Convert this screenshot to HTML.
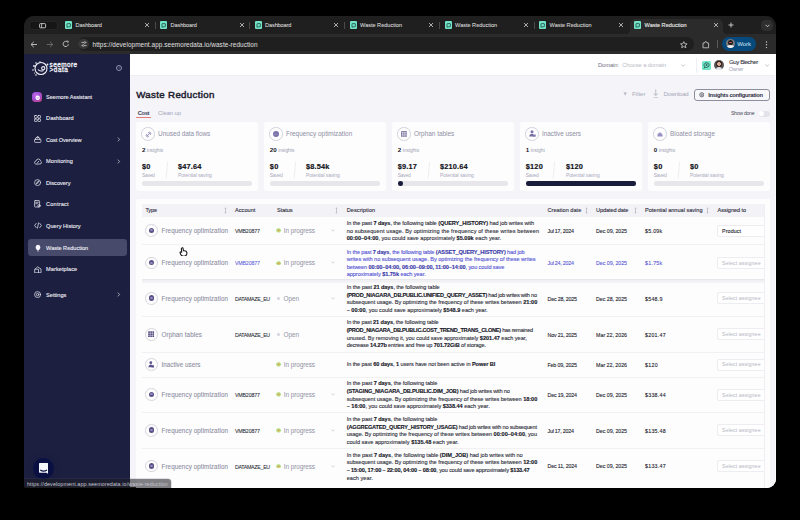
<!DOCTYPE html>
<html><head><meta charset="utf-8"><style>
html,body{margin:0;padding:0;width:800px;height:520px;background:#000;overflow:hidden;}
#win{position:absolute;left:24px;top:16px;width:752px;height:471.5px;border-radius:10px 10px 9px 2px;overflow:hidden;background:#1f1f1f;}
.pg{position:absolute;left:-24px;top:-16px;width:800px;height:520px;}
.pg div{position:absolute;box-sizing:border-box;}
.t{white-space:nowrap;line-height:0;font-family:"Liberation Sans",sans-serif;}
b{font-weight:700;color:var(--b,inherit);}
</style></head><body>
<div id="win">
<div class="pg">
<div style="left:24px;top:16px;width:752px;height:18px;background:#1f1f1f;"></div>
<div style="left:24px;top:34px;width:752px;height:20px;background:#2b2b2b;"></div>
<div style="left:29px;top:21px;width:28.5px;height:8.5px;background:#161616;border-radius:5px;box-shadow:inset 0 0 0 0.6px #333;"></div>
<svg style="position:absolute;left:39px;top:22.5px;" width="8" height="6" viewBox="0 0 8 6"><rect x="0.6" y="0.6" width="6" height="4.2" rx="0.8" fill="none" stroke="#cfcfcf" stroke-width="0.9"/><line x1="2.6" y1="0.6" x2="2.6" y2="4.8" stroke="#cfcfcf" stroke-width="0.8"/></svg>
<div style="left:630px;top:19px;width:93px;height:16px;background:#2b2b2b;border-radius:5px 5px 0 0;"></div>
<div style="left:626px;top:30px;width:4px;height:4px;background:radial-gradient(circle at 0 0,#1f1f1f 4px,#2b2b2b 4.2px);"></div>
<div style="left:723px;top:30px;width:4px;height:4px;background:radial-gradient(circle at 100% 0,#1f1f1f 4px,#2b2b2b 4.2px);"></div>
<div style="left:65px;top:21.2px;width:7.4px;height:7.6px;background:#72e3c6;border-radius:1px;"></div>
<svg style="position:absolute;left:66.2px;top:22.5px;" width="5" height="5" viewBox="0 0 5 5"><path d="M1 4.3 L1 1 Q1 0.6 1.4 0.6 L4 0.6 Q4.4 0.6 4.4 1 L4.4 3.4 Q4.4 3.8 4 3.8 L2 3.8 Z" fill="none" stroke="#1d4d44" stroke-width="0.8"/></svg>
<svg style="position:absolute;left:143.5px;top:22.3px;" width="6" height="6" viewBox="0 0 6 6"><path d="M1 1 L5 5 M5 1 L1 5" stroke="#cfcfcf" stroke-width="0.8"/></svg>
<div style="left:154.8px;top:22px;width:0.7px;height:7px;background:#4a4a4a;"></div>
<div style="left:160px;top:21.2px;width:7.4px;height:7.6px;background:#72e3c6;border-radius:1px;"></div>
<svg style="position:absolute;left:161.2px;top:22.5px;" width="5" height="5" viewBox="0 0 5 5"><path d="M1 4.3 L1 1 Q1 0.6 1.4 0.6 L4 0.6 Q4.4 0.6 4.4 1 L4.4 3.4 Q4.4 3.8 4 3.8 L2 3.8 Z" fill="none" stroke="#1d4d44" stroke-width="0.8"/></svg>
<svg style="position:absolute;left:238.5px;top:22.3px;" width="6" height="6" viewBox="0 0 6 6"><path d="M1 1 L5 5 M5 1 L1 5" stroke="#cfcfcf" stroke-width="0.8"/></svg>
<div style="left:249.3px;top:22px;width:0.7px;height:7px;background:#4a4a4a;"></div>
<div style="left:254.5px;top:21.2px;width:7.4px;height:7.6px;background:#72e3c6;border-radius:1px;"></div>
<svg style="position:absolute;left:255.7px;top:22.5px;" width="5" height="5" viewBox="0 0 5 5"><path d="M1 4.3 L1 1 Q1 0.6 1.4 0.6 L4 0.6 Q4.4 0.6 4.4 1 L4.4 3.4 Q4.4 3.8 4 3.8 L2 3.8 Z" fill="none" stroke="#1d4d44" stroke-width="0.8"/></svg>
<svg style="position:absolute;left:333.0px;top:22.3px;" width="6" height="6" viewBox="0 0 6 6"><path d="M1 1 L5 5 M5 1 L1 5" stroke="#cfcfcf" stroke-width="0.8"/></svg>
<div style="left:344.3px;top:22px;width:0.7px;height:7px;background:#4a4a4a;"></div>
<div style="left:349.5px;top:21.2px;width:7.4px;height:7.6px;background:#72e3c6;border-radius:1px;"></div>
<svg style="position:absolute;left:350.7px;top:22.5px;" width="5" height="5" viewBox="0 0 5 5"><path d="M1 4.3 L1 1 Q1 0.6 1.4 0.6 L4 0.6 Q4.4 0.6 4.4 1 L4.4 3.4 Q4.4 3.8 4 3.8 L2 3.8 Z" fill="none" stroke="#1d4d44" stroke-width="0.8"/></svg>
<svg style="position:absolute;left:428.0px;top:22.3px;" width="6" height="6" viewBox="0 0 6 6"><path d="M1 1 L5 5 M5 1 L1 5" stroke="#cfcfcf" stroke-width="0.8"/></svg>
<div style="left:439.3px;top:22px;width:0.7px;height:7px;background:#4a4a4a;"></div>
<div style="left:444.5px;top:21.2px;width:7.4px;height:7.6px;background:#72e3c6;border-radius:1px;"></div>
<svg style="position:absolute;left:445.7px;top:22.5px;" width="5" height="5" viewBox="0 0 5 5"><path d="M1 4.3 L1 1 Q1 0.6 1.4 0.6 L4 0.6 Q4.4 0.6 4.4 1 L4.4 3.4 Q4.4 3.8 4 3.8 L2 3.8 Z" fill="none" stroke="#1d4d44" stroke-width="0.8"/></svg>
<svg style="position:absolute;left:523.0px;top:22.3px;" width="6" height="6" viewBox="0 0 6 6"><path d="M1 1 L5 5 M5 1 L1 5" stroke="#cfcfcf" stroke-width="0.8"/></svg>
<div style="left:533.8px;top:22px;width:0.7px;height:7px;background:#4a4a4a;"></div>
<div style="left:539px;top:21.2px;width:7.4px;height:7.6px;background:#72e3c6;border-radius:1px;"></div>
<svg style="position:absolute;left:540.2px;top:22.5px;" width="5" height="5" viewBox="0 0 5 5"><path d="M1 4.3 L1 1 Q1 0.6 1.4 0.6 L4 0.6 Q4.4 0.6 4.4 1 L4.4 3.4 Q4.4 3.8 4 3.8 L2 3.8 Z" fill="none" stroke="#1d4d44" stroke-width="0.8"/></svg>
<svg style="position:absolute;left:617.5px;top:22.3px;" width="6" height="6" viewBox="0 0 6 6"><path d="M1 1 L5 5 M5 1 L1 5" stroke="#cfcfcf" stroke-width="0.8"/></svg>
<div style="left:634px;top:21.2px;width:7.4px;height:7.6px;background:#72e3c6;border-radius:1px;"></div>
<svg style="position:absolute;left:635.2px;top:22.5px;" width="5" height="5" viewBox="0 0 5 5"><path d="M1 4.3 L1 1 Q1 0.6 1.4 0.6 L4 0.6 Q4.4 0.6 4.4 1 L4.4 3.4 Q4.4 3.8 4 3.8 L2 3.8 Z" fill="none" stroke="#1d4d44" stroke-width="0.8"/></svg>
<svg style="position:absolute;left:712.5px;top:22.3px;" width="6" height="6" viewBox="0 0 6 6"><path d="M1 1 L5 5 M5 1 L1 5" stroke="#cfcfcf" stroke-width="0.8"/></svg>
<svg style="position:absolute;left:728px;top:22px;" width="6" height="6" viewBox="0 0 6 6"><path d="M3 0.5 V5.5 M0.5 3 H5.5" stroke="#d0d0d0" stroke-width="0.9"/></svg>
<div style="left:760.8px;top:19.6px;width:12.1px;height:11.6px;background:#2f2f2f;border-radius:4.5px;"></div>
<svg style="position:absolute;left:764.5px;top:23.5px;" width="5" height="4" viewBox="0 0 5 4"><path d="M0.6 0.8 L2.5 2.8 L4.4 0.8" fill="none" stroke="#d0d0d0" stroke-width="0.9"/></svg>
<svg style="position:absolute;left:30px;top:40.5px;" width="8" height="7" viewBox="0 0 8 7"><path d="M7 3.5 H1.2 M3.8 0.8 L1 3.5 L3.8 6.2" fill="none" stroke="#c8c8c8" stroke-width="0.9"/></svg>
<svg style="position:absolute;left:45.5px;top:40.5px;" width="8" height="7" viewBox="0 0 8 7"><path d="M0.8 3.5 H6.6 M4 0.8 L6.8 3.5 L4 6.2" fill="none" stroke="#6e6e6e" stroke-width="0.9"/></svg>
<svg style="position:absolute;left:61.5px;top:40.2px;" width="8" height="8" viewBox="0 0 8 8"><path d="M6.3 4.2 A2.6 2.6 0 1 1 5.4 2" fill="none" stroke="#c8c8c8" stroke-width="0.9"/><path d="M4.6 0.8 L6.3 1.2 L5.9 2.9" fill="none" stroke="#c8c8c8" stroke-width="0.8"/></svg>
<div style="left:77.5px;top:37px;width:616.5px;height:14px;background:#1f1f1f;border-radius:7px;"></div>
<div style="left:78.3px;top:38.6px;width:10.8px;height:10.8px;background:#383838;border-radius:50%;"></div>
<svg style="position:absolute;left:80.8px;top:41px;" width="6" height="6" viewBox="0 0 6 6"><path d="M0.5 1.5 H5.5 M0.5 4.5 H5.5" stroke="#d8d8d8" stroke-width="0.7"/><circle cx="3.7" cy="1.5" r="0.9" fill="#383838" stroke="#d8d8d8" stroke-width="0.6"/><circle cx="2.2" cy="4.5" r="0.9" fill="#383838" stroke="#d8d8d8" stroke-width="0.6"/></svg>
<svg style="position:absolute;left:680px;top:40.5px;" width="8" height="8" viewBox="0 0 8 8"><path d="M3.8 0.6 L4.8 2.7 L7.1 2.9 L5.3 4.4 L5.9 6.7 L3.8 5.5 L1.7 6.7 L2.3 4.4 L0.5 2.9 L2.8 2.7 Z" fill="none" stroke="#d0d0d0" stroke-width="0.8" stroke-linejoin="round"/></svg>
<svg style="position:absolute;left:702px;top:40.5px;" width="8" height="8" viewBox="0 0 8 8"><path d="M1 2 H2.6 Q2.6 0.6 3.8 0.6 Q5 0.6 5 2 H6.6 V6.8 H1 Z" fill="none" stroke="#d0d0d0" stroke-width="0.8" stroke-linejoin="round"/></svg>
<div style="left:717px;top:40px;width:0.7px;height:8px;background:#5a5a5a;"></div>
<div style="left:722px;top:36.8px;width:34.3px;height:14.2px;background:#064a7d;border-radius:7.1px;"></div>
<div style="left:725.9px;top:39.3px;width:9px;height:9px;border-radius:50%;overflow:hidden;background:#7a7a7a;"><div style="left:2.2px;top:1px;width:4.6px;height:5px;border-radius:50% 50% 45% 45%;background:#1e1e1e;"></div><div style="left:3.2px;top:2.4px;width:2.6px;height:1.6px;border-radius:50%;background:#d25a5a;"></div><div style="left:0.8px;top:6.2px;width:7.4px;height:4px;border-radius:50% 50% 0 0;background:#f0f0f0;"></div></div>
<svg style="position:absolute;left:764.5px;top:40.5px;" width="3" height="8" viewBox="0 0 3 8"><circle cx="1.5" cy="1" r="0.7" fill="#cfcfcf"/><circle cx="1.5" cy="3.8" r="0.7" fill="#cfcfcf"/><circle cx="1.5" cy="6.6" r="0.7" fill="#cfcfcf"/></svg>
<div style="left:24px;top:54px;width:106px;height:433px;background:#1c1f40;"></div>
<div style="left:130px;top:54px;width:646px;height:433px;background:#f5f4f9;"></div>
<div style="left:130px;top:54px;width:646px;height:22px;background:#ffffff;border-bottom:0.5px solid #ededf3;"></div>
<svg style="position:absolute;left:681.3px;top:63.8px;" width="4.5" height="3" viewBox="0 0 4.5 3"><path d="M0.5 0.5 L2.25 2.3 L4 0.5" fill="none" stroke="#9a9bab" stroke-width="0.6"/></svg>
<div style="left:696px;top:58px;width:0.6px;height:14.5px;background:#f1f1f5;"></div>
<div style="left:701.6px;top:60.9px;width:9.6px;height:9.3px;background:#6fe6c8;border-radius:1.5px;"></div>
<svg style="position:absolute;left:702.8px;top:62px;" width="7.2" height="7.2" viewBox="0 0 7.2 7.2"><path d="M1.2 6.2 L1.8 4.6 Q0.9 3.7 1.1 2.6 Q1.5 0.9 3.6 0.8 Q5.9 0.9 6.2 3 Q6.2 5.2 3.6 5.4 Q2.7 5.4 2.2 5.2 Z" fill="none" stroke="#234a4a" stroke-width="0.8"/><circle cx="3.6" cy="3.1" r="1" fill="#2d6a5a"/></svg>
<div style="left:713.8px;top:60.1px;width:10.2px;height:10.2px;border-radius:50%;background:radial-gradient(circle at 50% 40%,#d9a894 0 1.6px,#3a2a28 1.8px 3px,#555 3.2px 100%);"></div>
<div style="left:715.5px;top:66.8px;width:6.8px;height:3.4px;border-radius:3.4px 3.4px 0 0;background:#e6e6ea;"></div>
<svg style="position:absolute;left:765px;top:63.6px;" width="4.5" height="3" viewBox="0 0 4.5 3"><path d="M0.5 0.5 L2.25 2.3 L4 0.5" fill="none" stroke="#9a9bab" stroke-width="0.6"/></svg>
<div style="left:136px;top:117.2px;width:15px;height:1.3px;background:#e27a7a;border-radius:1px;"></div>
<svg style="position:absolute;left:622.6px;top:92.3px;" width="4.4" height="4" viewBox="0 0 4.4 4"><path d="M0.3 0.4 H4.1 L2.7 2.2 V3.6 L1.7 3.1 V2.2 Z" fill="#b3b4c2"/></svg>
<svg style="position:absolute;left:653px;top:88.8px;" width="5.5" height="9.6" viewBox="0 0 5.5 9.6"><path d="M2.75 0.4 V6.4 M0.7 4.4 L2.75 6.5 L4.8 4.4 M0.4 8.9 H5.1" fill="none" stroke="#a6a7b6" stroke-width="0.75"/></svg>
<div style="left:694.4px;top:88.6px;width:75.6px;height:12.6px;border:0.7px solid #8c8d9e;border-radius:3px;background:#f8f8fb;"></div>
<svg style="position:absolute;left:698.8px;top:92px;" width="5.6" height="5.6" viewBox="0 0 5.6 5.6"><circle cx="2.8" cy="2.8" r="2.1" fill="none" stroke="#3a3b4c" stroke-width="0.7"/><circle cx="2.8" cy="2.8" r="0.8" fill="none" stroke="#3a3b4c" stroke-width="0.6"/></svg>
<div style="left:758.7px;top:110.6px;width:11px;height:6px;background:#e3e3ea;border-radius:3px;"></div>
<div style="left:759.4px;top:111.3px;width:4.6px;height:4.6px;border-radius:50%;background:#fff;"></div>
<div style="left:136.1px;top:121.9px;width:122px;height:68.7px;background:#fdfdfe;border-radius:3px;"></div>
<div style="left:141.30px;top:127.4px;width:13.4px;height:13.4px;border:0.7px solid #d3d3dc;border-radius:50%;"></div>
<svg style="position:absolute;left:164.6px;top:160.5px;" width="4" height="18" viewBox="0 0 4 18"><path d="M2.6 0.5 L1.2 17.5" stroke="#e4e4eb" stroke-width="0.6"/></svg>
<div style="left:141.9px;top:181.3px;width:110.6px;height:4.4px;background:#e6e6eb;border-radius:2.2px;"></div>
<div style="left:264.0px;top:121.9px;width:122px;height:68.7px;background:#fdfdfe;border-radius:3px;"></div>
<div style="left:269.20px;top:127.4px;width:13.4px;height:13.4px;border:0.7px solid #d3d3dc;border-radius:50%;"></div>
<svg style="position:absolute;left:292.5px;top:160.5px;" width="4" height="18" viewBox="0 0 4 18"><path d="M2.6 0.5 L1.2 17.5" stroke="#e4e4eb" stroke-width="0.6"/></svg>
<div style="left:269.8px;top:181.3px;width:110.6px;height:4.4px;background:#e6e6eb;border-radius:2.2px;"></div>
<div style="left:392.0px;top:121.9px;width:122px;height:68.7px;background:#fdfdfe;border-radius:3px;"></div>
<div style="left:397.20px;top:127.4px;width:13.4px;height:13.4px;border:0.7px solid #d3d3dc;border-radius:50%;"></div>
<svg style="position:absolute;left:426.571673125px;top:160.5px;" width="4" height="18" viewBox="0 0 4 18"><path d="M2.6 0.5 L1.2 17.5" stroke="#e4e4eb" stroke-width="0.6"/></svg>
<div style="left:397.8px;top:181.3px;width:110.6px;height:4.4px;background:#e6e6eb;border-radius:2.2px;"></div>
<div style="left:397.8px;top:181.3px;width:5px;height:4.4px;background:#1b1d3d;border-radius:2.2px;"></div>
<div style="left:520.0px;top:121.9px;width:122px;height:68.7px;background:#fdfdfe;border-radius:3px;"></div>
<div style="left:525.20px;top:127.4px;width:13.4px;height:13.4px;border:0.7px solid #d3d3dc;border-radius:50%;"></div>
<svg style="position:absolute;left:552.45418625px;top:160.5px;" width="4" height="18" viewBox="0 0 4 18"><path d="M2.6 0.5 L1.2 17.5" stroke="#e4e4eb" stroke-width="0.6"/></svg>
<div style="left:525.8px;top:181.3px;width:110.6px;height:4.4px;background:#e6e6eb;border-radius:2.2px;"></div>
<div style="left:525.8px;top:181.3px;width:110.6px;height:4.4px;background:#1b1d3d;border-radius:2.2px;"></div>
<div style="left:648.0px;top:121.9px;width:122px;height:68.7px;background:#fdfdfe;border-radius:3px;"></div>
<div style="left:653.20px;top:127.4px;width:13.4px;height:13.4px;border:0.7px solid #d3d3dc;border-radius:50%;"></div>
<svg style="position:absolute;left:676.5px;top:160.5px;" width="4" height="18" viewBox="0 0 4 18"><path d="M2.6 0.5 L1.2 17.5" stroke="#e4e4eb" stroke-width="0.6"/></svg>
<div style="left:653.8px;top:181.3px;width:110.6px;height:4.4px;background:#e6e6eb;border-radius:2.2px;"></div>
<div style="left:136px;top:199px;width:634px;height:300px;background:#fdfdfe;border-radius:3px;"></div>
<div style="left:142px;top:204px;width:621.5px;height:12.6px;background:#f3f2f7;"></div>
<svg style="position:absolute;left:223.5px;top:206.8px;" width="3" height="7" viewBox="0 0 3 7"><path d="M1.5 0.4 L0.5 1.6 H2.5 Z M1.5 6.6 L0.5 5.4 H2.5 Z" fill="#9c9cab"/><path d="M1.5 1.5 V5.5" stroke="#9c9cab" stroke-width="0.5"/></svg>
<svg style="position:absolute;left:334.5px;top:206.8px;" width="3" height="7" viewBox="0 0 3 7"><path d="M1.5 0.4 L0.5 1.6 H2.5 Z M1.5 6.6 L0.5 5.4 H2.5 Z" fill="#9c9cab"/><path d="M1.5 1.5 V5.5" stroke="#9c9cab" stroke-width="0.5"/></svg>
<svg style="position:absolute;left:584.5px;top:206.8px;" width="3" height="7" viewBox="0 0 3 7"><path d="M1.5 0.4 L0.5 1.6 H2.5 Z M1.5 6.6 L0.5 5.4 H2.5 Z" fill="#9c9cab"/><path d="M1.5 1.5 V5.5" stroke="#9c9cab" stroke-width="0.5"/></svg>
<svg style="position:absolute;left:633.5px;top:206.8px;" width="3" height="7" viewBox="0 0 3 7"><path d="M1.5 0.4 L0.5 1.6 H2.5 Z M1.5 6.6 L0.5 5.4 H2.5 Z" fill="#9c9cab"/><path d="M1.5 1.5 V5.5" stroke="#9c9cab" stroke-width="0.5"/></svg>
<svg style="position:absolute;left:705.8px;top:206.8px;" width="3" height="7" viewBox="0 0 3 7"><path d="M1.5 0.4 L0.5 1.6 H2.5 Z M1.5 6.6 L0.5 5.4 H2.5 Z" fill="#9c9cab"/><path d="M1.5 1.5 V5.5" stroke="#9c9cab" stroke-width="0.5"/></svg>
<div style="left:142px;top:244.10px;width:621.5px;height:0;border-top:0.7px solid #f1f1f4;"></div>
<div style="left:145.00px;top:224.45px;width:12.6px;height:12.6px;border:0.7px solid #d6d6de;border-radius:50%;"></div>
<div style="left:148.60px;top:227.65px;width:5.6px;height:5.6px;border-radius:50%;background:#5a5088;"></div>
<svg style="position:absolute;left:149.9px;top:229.45px;" width="3" height="2" viewBox="0 0 3 2"><rect x="0.3" y="0.2" width="2.4" height="1.6" rx="0.4" fill="#c9c3e8" opacity="0.7"/></svg>
<svg style="position:absolute;left:275.9px;top:228.45px;" width="5.2" height="4.6" viewBox="0 0 5.2 4.6"><path d="M1.6 0.4 H3.6 V1.4 H4.9 V3.2 H3.6 V4.3 H1.6 V3.2 H0.3 V1.4 H1.6 Z" fill="#a6dd72" stroke="#a6dd72" stroke-width="0.3" stroke-linejoin="round"/><path d="M3.6 0.5 L1.0 2.6 H2.5 L1.6 4.2 L4.3 2.0 H2.8 Z" fill="#f0a04e"/></svg>
<svg style="position:absolute;left:330.8px;top:229.25px;" width="4" height="3" viewBox="0 0 4 3"><path d="M0.4 0.5 L2 2.2 L3.6 0.5" fill="none" stroke="#b0b1be" stroke-width="0.55"/></svg>
<div style="left:717px;top:224.75px;width:50px;height:12px;border:0.6px solid #ececf1;border-radius:2px;background:#fff;"></div>
<div style="left:142px;top:279.3px;width:621.5px;height:4.5px;background:linear-gradient(#e4e4ea,rgba(240,240,245,0));"></div>
<div style="left:142px;top:279.50px;width:621.5px;height:0;border-top:0.7px solid #f1f1f4;"></div>
<div style="left:145.00px;top:256.50px;width:12.6px;height:12.6px;border:0.7px solid #d6d6de;border-radius:50%;"></div>
<div style="left:148.60px;top:259.70px;width:5.6px;height:5.6px;border-radius:50%;background:#5a5088;"></div>
<svg style="position:absolute;left:149.9px;top:261.5px;" width="3" height="2" viewBox="0 0 3 2"><rect x="0.3" y="0.2" width="2.4" height="1.6" rx="0.4" fill="#c9c3e8" opacity="0.7"/></svg>
<svg style="position:absolute;left:275.9px;top:260.5px;" width="5.2" height="4.6" viewBox="0 0 5.2 4.6"><path d="M1.6 0.4 H3.6 V1.4 H4.9 V3.2 H3.6 V4.3 H1.6 V3.2 H0.3 V1.4 H1.6 Z" fill="#a6dd72" stroke="#a6dd72" stroke-width="0.3" stroke-linejoin="round"/><path d="M3.6 0.5 L1.0 2.6 H2.5 L1.6 4.2 L4.3 2.0 H2.8 Z" fill="#f0a04e"/></svg>
<svg style="position:absolute;left:330.8px;top:261.3px;" width="4" height="3" viewBox="0 0 4 3"><path d="M0.4 0.5 L2 2.2 L3.6 0.5" fill="none" stroke="#b0b1be" stroke-width="0.55"/></svg>
<div style="left:717px;top:256.80px;width:50px;height:12px;border:0.6px solid #ececf1;border-radius:2px;background:#fff;"></div>
<div style="left:142px;top:315.50px;width:621.5px;height:0;border-top:0.7px solid #f1f1f4;"></div>
<div style="left:145.00px;top:292.00px;width:12.6px;height:12.6px;border:0.7px solid #d6d6de;border-radius:50%;"></div>
<div style="left:148.60px;top:295.20px;width:5.6px;height:5.6px;border-radius:50%;background:#5a5088;"></div>
<svg style="position:absolute;left:149.9px;top:297.0px;" width="3" height="2" viewBox="0 0 3 2"><rect x="0.3" y="0.2" width="2.4" height="1.6" rx="0.4" fill="#c9c3e8" opacity="0.7"/></svg>
<div style="left:277.3px;top:297.00px;width:2.6px;height:2.6px;border-radius:50%;background:#d8d8e0;"></div>
<svg style="position:absolute;left:330.8px;top:296.8px;" width="4" height="3" viewBox="0 0 4 3"><path d="M0.4 0.5 L2 2.2 L3.6 0.5" fill="none" stroke="#b0b1be" stroke-width="0.55"/></svg>
<div style="left:717px;top:292.30px;width:50px;height:12px;border:0.6px solid #ececf1;border-radius:2px;background:#fff;"></div>
<div style="left:142px;top:351.90px;width:621.5px;height:0;border-top:0.7px solid #f1f1f4;"></div>
<div style="left:145.00px;top:328.10px;width:12.6px;height:12.6px;border:0.7px solid #d6d6de;border-radius:50%;"></div>
<svg style="position:absolute;left:148.20000000000002px;top:330.9px;" width="6.4" height="6.4" viewBox="0 0 6.4 6.4"><g fill="#5a5388"><rect x="0.15" y="0.15" width="1.75" height="1.75" rx="0.35"/><rect x="0.15" y="2.25" width="1.75" height="1.75" rx="0.35"/><rect x="0.15" y="4.35" width="1.75" height="1.75" rx="0.35"/><rect x="2.25" y="0.15" width="1.75" height="1.75" rx="0.35"/><rect x="2.25" y="2.25" width="1.75" height="1.75" rx="0.35"/><rect x="2.25" y="4.35" width="1.75" height="1.75" rx="0.35"/><rect x="4.35" y="0.15" width="1.75" height="1.75" rx="0.35"/><rect x="4.35" y="2.25" width="1.75" height="1.75" rx="0.35"/><rect x="4.35" y="4.35" width="1.75" height="1.75" rx="0.35"/></g></svg>
<div style="left:277.3px;top:333.10px;width:2.6px;height:2.6px;border-radius:50%;background:#d8d8e0;"></div>
<div style="left:717px;top:328.40px;width:50px;height:12px;border:0.6px solid #ececf1;border-radius:2px;background:#fff;"></div>
<div style="left:142px;top:376.60px;width:621.5px;height:0;border-top:0.7px solid #f1f1f4;"></div>
<div style="left:145.00px;top:358.20px;width:12.6px;height:12.6px;border:0.7px solid #d6d6de;border-radius:50%;"></div>
<svg style="position:absolute;left:148.10000000000002px;top:361.1px;" width="6.4" height="6.8" viewBox="0 0 6.4 6.8"><circle cx="2.8" cy="1.7" r="1.4" fill="#5d538d"/><path d="M0.3 6.2 Q0.6 3.6 2.8 3.6 Q4 3.6 4.5 4.3 L4.5 6.2 Z" fill="#5d538d"/><rect x="3.6" y="4.3" width="2.6" height="2.2" rx="0.5" fill="#5d538d"/></svg>
<svg style="position:absolute;left:275.9px;top:362.2px;" width="5.2" height="4.6" viewBox="0 0 5.2 4.6"><path d="M1.6 0.4 H3.6 V1.4 H4.9 V3.2 H3.6 V4.3 H1.6 V3.2 H0.3 V1.4 H1.6 Z" fill="#a6dd72" stroke="#a6dd72" stroke-width="0.3" stroke-linejoin="round"/><path d="M3.6 0.5 L1.0 2.6 H2.5 L1.6 4.2 L4.3 2.0 H2.8 Z" fill="#f0a04e"/></svg>
<div style="left:717px;top:358.50px;width:50px;height:12px;border:0.6px solid #ececf1;border-radius:2px;background:#fff;"></div>
<div style="left:142px;top:412.10px;width:621.5px;height:0;border-top:0.7px solid #f1f1f4;"></div>
<div style="left:145.00px;top:388.40px;width:12.6px;height:12.6px;border:0.7px solid #d6d6de;border-radius:50%;"></div>
<div style="left:148.60px;top:391.60px;width:5.6px;height:5.6px;border-radius:50%;background:#5a5088;"></div>
<svg style="position:absolute;left:149.9px;top:393.4px;" width="3" height="2" viewBox="0 0 3 2"><rect x="0.3" y="0.2" width="2.4" height="1.6" rx="0.4" fill="#c9c3e8" opacity="0.7"/></svg>
<svg style="position:absolute;left:275.9px;top:392.4px;" width="5.2" height="4.6" viewBox="0 0 5.2 4.6"><path d="M1.6 0.4 H3.6 V1.4 H4.9 V3.2 H3.6 V4.3 H1.6 V3.2 H0.3 V1.4 H1.6 Z" fill="#a6dd72" stroke="#a6dd72" stroke-width="0.3" stroke-linejoin="round"/><path d="M3.6 0.5 L1.0 2.6 H2.5 L1.6 4.2 L4.3 2.0 H2.8 Z" fill="#f0a04e"/></svg>
<svg style="position:absolute;left:330.8px;top:393.2px;" width="4" height="3" viewBox="0 0 4 3"><path d="M0.4 0.5 L2 2.2 L3.6 0.5" fill="none" stroke="#b0b1be" stroke-width="0.55"/></svg>
<div style="left:717px;top:388.70px;width:50px;height:12px;border:0.6px solid #ececf1;border-radius:2px;background:#fff;"></div>
<div style="left:142px;top:447.70px;width:621.5px;height:0;border-top:0.7px solid #f1f1f4;"></div>
<div style="left:145.00px;top:424.10px;width:12.6px;height:12.6px;border:0.7px solid #d6d6de;border-radius:50%;"></div>
<div style="left:148.60px;top:427.30px;width:5.6px;height:5.6px;border-radius:50%;background:#5a5088;"></div>
<svg style="position:absolute;left:149.9px;top:429.09999999999997px;" width="3" height="2" viewBox="0 0 3 2"><rect x="0.3" y="0.2" width="2.4" height="1.6" rx="0.4" fill="#c9c3e8" opacity="0.7"/></svg>
<svg style="position:absolute;left:275.9px;top:428.09999999999997px;" width="5.2" height="4.6" viewBox="0 0 5.2 4.6"><path d="M1.6 0.4 H3.6 V1.4 H4.9 V3.2 H3.6 V4.3 H1.6 V3.2 H0.3 V1.4 H1.6 Z" fill="#a6dd72" stroke="#a6dd72" stroke-width="0.3" stroke-linejoin="round"/><path d="M3.6 0.5 L1.0 2.6 H2.5 L1.6 4.2 L4.3 2.0 H2.8 Z" fill="#f0a04e"/></svg>
<svg style="position:absolute;left:330.8px;top:428.9px;" width="4" height="3" viewBox="0 0 4 3"><path d="M0.4 0.5 L2 2.2 L3.6 0.5" fill="none" stroke="#b0b1be" stroke-width="0.55"/></svg>
<div style="left:717px;top:424.40px;width:50px;height:12px;border:0.6px solid #ececf1;border-radius:2px;background:#fff;"></div>
<div style="left:145.00px;top:459.80px;width:12.6px;height:12.6px;border:0.7px solid #d6d6de;border-radius:50%;"></div>
<div style="left:148.60px;top:463.00px;width:5.6px;height:5.6px;border-radius:50%;background:#5a5088;"></div>
<svg style="position:absolute;left:149.9px;top:464.8px;" width="3" height="2" viewBox="0 0 3 2"><rect x="0.3" y="0.2" width="2.4" height="1.6" rx="0.4" fill="#c9c3e8" opacity="0.7"/></svg>
<svg style="position:absolute;left:275.9px;top:463.8px;" width="5.2" height="4.6" viewBox="0 0 5.2 4.6"><path d="M1.6 0.4 H3.6 V1.4 H4.9 V3.2 H3.6 V4.3 H1.6 V3.2 H0.3 V1.4 H1.6 Z" fill="#a6dd72" stroke="#a6dd72" stroke-width="0.3" stroke-linejoin="round"/><path d="M3.6 0.5 L1.0 2.6 H2.5 L1.6 4.2 L4.3 2.0 H2.8 Z" fill="#f0a04e"/></svg>
<svg style="position:absolute;left:330.8px;top:464.6px;" width="4" height="3" viewBox="0 0 4 3"><path d="M0.4 0.5 L2 2.2 L3.6 0.5" fill="none" stroke="#b0b1be" stroke-width="0.55"/></svg>
<div style="left:717px;top:460.10px;width:50px;height:12px;border:0.6px solid #ececf1;border-radius:2px;background:#fff;"></div>
<div style="left:763.5px;top:199px;width:6.5px;height:300px;background:#fdfdfe;"></div>
<div style="left:763.5px;top:204px;width:0.6px;height:300px;background:#efeff4;"></div>
<div style="left:770px;top:76px;width:5px;height:433px;background:#f5f4f9;"></div>
<div style="left:775px;top:54px;width:1px;height:434px;background:#fbfbfd;"></div>
<svg style="position:absolute;left:31px;top:59.5px;" width="19" height="17" viewBox="0 0 19 17"><g fill="none" stroke="#f2f2f7" stroke-width="1.1"><circle cx="10" cy="8.5" r="6"/><path d="M7 9.5 Q9 12 12.5 10.5"/><circle cx="12.2" cy="8.2" r="1.6"/></g><g fill="#f2f2f7"><circle cx="3" cy="6" r="0.9"/><circle cx="2" cy="10" r="0.8"/><circle cx="5" cy="3" r="0.8"/><circle cx="16.5" cy="4.5" r="0.9"/><circle cx="5" cy="15" r="0.8"/><circle cx="3.5" cy="13" r="0.6"/><circle cx="9" cy="2" r="0.7"/></g></svg>
<div style="left:116.2px;top:65px;width:6px;height:6px;border:0.7px solid #8f91ad;border-radius:50%;"></div>
<svg style="position:absolute;left:117.6px;top:66.4px;" width="3.2" height="3.2" viewBox="0 0 3.2 3.2"><path d="M2 0.4 L0.8 1.6 L2 2.8" fill="none" stroke="#8f91ad" stroke-width="0.6"/></svg>
<div style="left:32.4px;top:92.4px;width:10px;height:9.6px;border-radius:3.5px;background:radial-gradient(circle at 40% 35%,#c46be8 0,#9b4fd6 45%,#d9406c 100%);"></div>
<svg style="position:absolute;left:34.7px;top:94.5px;" width="5.4" height="5.4" viewBox="0 0 5.4 5.4"><circle cx="2.7" cy="2.7" r="2.2" fill="#fff"/><path d="M1.8 2.3 L2.7 3.4 L3.6 2.3" fill="none" stroke="#b44fd0" stroke-width="0.6"/></svg>
<div style="left:28px;top:239px;width:99px;height:17.2px;background:#474a6b;border-radius:3px;"></div>
<svg style="position:absolute;left:34px;top:114.5px;" width="7" height="7" viewBox="0 0 7 7"><g fill="none" stroke="#e3e3ec" stroke-width="0.75" stroke-linejoin="round" stroke-linecap="round"><rect x="0.5" y="0.5" width="2.6" height="2.6" rx="0.6"/><rect x="3.9" y="0.5" width="2.6" height="2.6" rx="0.6"/><rect x="0.5" y="3.9" width="2.6" height="2.6" rx="0.6"/><rect x="3.9" y="3.9" width="2.6" height="2.6" rx="0.6"/></g></svg>
<svg style="position:absolute;left:34px;top:136px;" width="7.5" height="7" viewBox="0 0 7.5 7"><g fill="none" stroke="#e3e3ec" stroke-width="0.75" stroke-linejoin="round" stroke-linecap="round"><rect x="0.6" y="3.4" width="6.3" height="3" rx="0.6"/><path d="M1.6 3.4 V2 Q3.7 0.3 5.8 2 V3.4"/><circle cx="3.7" cy="1.3" r="0.8"/></g></svg>
<svg style="position:absolute;left:33.8px;top:157.6px;" width="8" height="7" viewBox="0 0 8 7"><g fill="none" stroke="#e3e3ec" stroke-width="0.75" stroke-linejoin="round" stroke-linecap="round"><path d="M1.4 6 Q0.3 5.6 0.6 4.2 Q0.9 3 2 3 Q2.5 0.8 4.5 1 Q6.4 1.3 6.6 3.2 Q7.6 3.6 7.4 5 Q7.2 6 6.3 6 Z"/><path d="M3.2 5.2 L4.6 3.4"/></g></svg>
<svg style="position:absolute;left:34px;top:179.3px;" width="7.2" height="7.2" viewBox="0 0 7.2 7.2"><g fill="none" stroke="#e3e3ec" stroke-width="0.75" stroke-linejoin="round" stroke-linecap="round"><circle cx="3.6" cy="3.6" r="3"/><path d="M4.8 2.2 L3.9 4 L2.4 5 L3.2 3.2 Z"/></g></svg>
<svg style="position:absolute;left:34.2px;top:200.2px;" width="7" height="8" viewBox="0 0 7 8"><g fill="none" stroke="#e3e3ec" stroke-width="0.75" stroke-linejoin="round" stroke-linecap="round"><rect x="0.6" y="0.6" width="5" height="6.4" rx="0.6"/><path d="M1.8 2.3 H4.4 M1.8 3.7 H3.4"/><circle cx="5" cy="5.8" r="1.2"/></g></svg>
<svg style="position:absolute;left:33.5px;top:222.3px;" width="8" height="7" viewBox="0 0 8 7"><g fill="none" stroke="#e3e3ec" stroke-width="0.75" stroke-linejoin="round" stroke-linecap="round"><path d="M2.2 1.4 L0.6 3.5 L2.2 5.6 M5.8 1.4 L7.4 3.5 L5.8 5.6 M4.6 0.8 L3.4 6.2"/></g></svg>
<svg style="position:absolute;left:34.5px;top:243.5px;" width="6" height="8" viewBox="0 0 6 8"><path d="M3 0.8 Q5.4 0.8 5.4 3.3 Q5.4 4.5 4.3 5.4 V6 H1.7 V5.4 Q0.6 4.5 0.6 3.3 Q0.6 0.8 3 0.8 Z" fill="#f5f5fa"/><path d="M2 6.9 H4" stroke="#f5f5fa" stroke-width="0.7"/></svg>
<svg style="position:absolute;left:33.8px;top:265.5px;" width="8" height="7.5" viewBox="0 0 8 7.5"><g fill="none" stroke="#e3e3ec" stroke-width="0.75" stroke-linejoin="round" stroke-linecap="round"><path d="M1 3.2 L3.6 0.8 L7 3 V6.8 H1 Z"/><path d="M1 3.2 H4.5 V6.8"/></g></svg>
<svg style="position:absolute;left:34px;top:291.2px;" width="7.2" height="7.2" viewBox="0 0 7.2 7.2"><g fill="none" stroke="#e3e3ec" stroke-width="0.75" stroke-linejoin="round" stroke-linecap="round"><circle cx="3.6" cy="3.6" r="3"/><circle cx="3.6" cy="3.6" r="1.2"/></g></svg>
<svg style="position:absolute;left:117px;top:137.3px;" width="3.5" height="5" viewBox="0 0 3.5 5"><path d="M0.8 0.6 L2.6 2.5 L0.8 4.4" fill="none" stroke="#d8d8e4" stroke-width="0.7"/></svg>
<svg style="position:absolute;left:117px;top:158.8px;" width="3.5" height="5" viewBox="0 0 3.5 5"><path d="M0.8 0.6 L2.6 2.5 L0.8 4.4" fill="none" stroke="#d8d8e4" stroke-width="0.7"/></svg>
<svg style="position:absolute;left:117px;top:292.1px;" width="3.5" height="5" viewBox="0 0 3.5 5"><path d="M0.8 0.6 L2.6 2.5 L0.8 4.4" fill="none" stroke="#d8d8e4" stroke-width="0.7"/></svg>
<div style="left:23px;top:448px;width:41px;height:41px;border-radius:50%;background:radial-gradient(circle,rgba(20,24,60,0.6) 0,rgba(28,31,64,0) 70%);"></div>
<div style="left:33.4px;top:458.4px;width:20.5px;height:20.5px;border-radius:50%;background:#0a1142;"></div>
<svg style="position:absolute;left:38.8px;top:463px;" width="9.4" height="11.2" viewBox="0 0 9.4 11.2"><path d="M0.7 0 H8.5 Q9.2 0 9.2 0.7 V11 L7.3 9.7 H0.7 Q0 9.7 0 9 V0.7 Q0 0 0.7 0 Z" fill="#f6f7fb"/><path d="M1.2 7 Q4.6 9.2 8 7" fill="none" stroke="#0a1142" stroke-width="1.1"/></svg>
<svg style="position:absolute;left:144.5px;top:130.5px;opacity:0.8;" width="7" height="7" viewBox="0 0 7 7"><g fill="none" stroke="#7d74ad" stroke-width="1" stroke-linecap="round"><path d="M2.4 4.6 L4.6 2.4"/><path d="M3.4 1.6 Q4.4 0.6 5.4 1.6 Q6.4 2.6 5.4 3.6"/><path d="M3.6 5.4 Q2.6 6.4 1.6 5.4 Q0.6 4.4 1.6 3.4"/></g></svg>
<div style="left:272.7px;top:131px;width:6.4px;height:6.4px;border-radius:50%;background:#7b72aa;"></div>
<svg style="position:absolute;left:274.3px;top:132.9px;" width="3.2" height="2.4" viewBox="0 0 3.2 2.4"><path d="M0.4 1.6 Q1.6 0.2 2.8 1.6" fill="none" stroke="#c9c3e8" stroke-width="0.5"/></svg>
<svg style="position:absolute;left:400.6px;top:130.60000000000002px;" width="6.4" height="6.4" viewBox="0 0 6.4 6.4"><g fill="none" stroke="#5a5388" stroke-width="0.75"><rect x="0.4" y="0.4" width="5.6" height="5.6" rx="0.6"/><path d="M2.27 0.4 V6 M4.13 0.4 V6 M0.4 2.27 H6 M0.4 4.13 H6" stroke-width="0.5"/></g></svg>
<svg style="position:absolute;left:528.6px;top:130.4px;" width="7" height="7" viewBox="0 0 7 7"><circle cx="3" cy="1.8" r="1.5" fill="#7b72aa"/><path d="M0.3 6.6 Q0.5 3.8 3 3.8 Q4.2 3.8 4.7 4.5 L4.7 6.6 Z" fill="#746c9e"/><rect x="3.8" y="4.4" width="3" height="2.4" rx="0.6" fill="#8a7bb5"/></svg>
<svg style="position:absolute;left:657px;top:131.5px;" width="6" height="5" viewBox="0 0 6 5"><path d="M0.5 4.6 V2.6 Q0.5 1.8 1.3 1.8 Q1.6 0.4 3 0.5 Q4.6 0.6 4.8 2 Q5.6 2.2 5.6 3.2 V4.6 Z" fill="#9a90c4"/></svg>
<div style="left:24px;top:478.6px;width:147px;height:9px;background:rgba(28,28,34,0.56);border-top-right-radius:3px;box-shadow:0 0 0 0.5px rgba(90,90,100,0.35);"></div>
<svg style="position:absolute;left:0;top:0;overflow:visible;white-space:pre" width="800" height="520" font-family="Liberation Sans"><text x="75.60" y="27.20" font-size="5.6" fill="#d0d0d0" textLength="26.30" lengthAdjust="spacing" stroke="#d0d0d0" stroke-width="0.1">Dashboard</text>
<text x="170.60" y="27.20" font-size="5.6" fill="#d0d0d0" textLength="26.30" lengthAdjust="spacing" stroke="#d0d0d0" stroke-width="0.1">Dashboard</text>
<text x="265.10" y="27.20" font-size="5.6" fill="#d0d0d0" textLength="26.30" lengthAdjust="spacing" stroke="#d0d0d0" stroke-width="0.1">Dashboard</text>
<text x="360.10" y="27.20" font-size="5.6" fill="#d0d0d0" textLength="42.00" lengthAdjust="spacing" stroke="#d0d0d0" stroke-width="0.1">Waste Reduction</text>
<text x="455.10" y="27.20" font-size="5.6" fill="#d0d0d0" textLength="42.00" lengthAdjust="spacing" stroke="#d0d0d0" stroke-width="0.1">Waste Reduction</text>
<text x="549.60" y="27.20" font-size="5.6" fill="#d0d0d0" textLength="42.00" lengthAdjust="spacing" stroke="#d0d0d0" stroke-width="0.1">Waste Reduction</text>
<text x="644.60" y="27.20" font-size="5.6" fill="#ececec" textLength="42.00" lengthAdjust="spacing" stroke="#ececec" stroke-width="0.1">Waste Reduction</text>
<text x="92.50" y="46.60" font-size="6.4" fill="#e0e0e0" textLength="165.00" lengthAdjust="spacing">https://development.app.seemoredata.io/waste-reduction</text>
<text x="737.20" y="45.90" font-size="6" fill="#d6e6f8" textLength="13.80" lengthAdjust="spacing">Work</text>
<text x="598.00" y="67.30" font-size="5.8" fill="#6f7085" textLength="20.90" lengthAdjust="spacing">Domain:</text>
<text x="622.30" y="67.30" font-size="5.8" fill="#b9bac6" textLength="44.00" lengthAdjust="spacing">Choose a domain</text>
<text x="729.00" y="64.30" font-size="6.2" fill="#3c3c4a" textLength="29.20" lengthAdjust="spacing" stroke="#3c3c4a" stroke-width="0.1">Guy Biecher</text>
<text x="729.00" y="70.60" font-size="5.2" fill="#a0a1b8" textLength="14.30" lengthAdjust="spacing">Owner</text>
<text x="136.20" y="98.10" font-size="9.7" fill="#20212e" textLength="78.20" lengthAdjust="spacing" stroke="#20212e" stroke-width="0.45">Waste Reduction</text>
<text x="137.80" y="115.10" font-size="5.8" fill="#3d3e5a" font-weight="700" textLength="11.60" lengthAdjust="spacing">Cost</text>
<text x="158.10" y="115.10" font-size="5.8" fill="#a3a4ba" textLength="22.90" lengthAdjust="spacing">Clean up</text>
<text x="631.90" y="96.40" font-size="6.0" fill="#a6a7b6" textLength="13.60" lengthAdjust="spacing">Filter</text>
<text x="663.50" y="96.40" font-size="6.0" fill="#a6a7b6" textLength="25.10" lengthAdjust="spacing">Download</text>
<text x="708.20" y="96.60" font-size="5.8" fill="#2b2c3d" font-weight="700" textLength="54.80" lengthAdjust="spacing">Insights configuration</text>
<text x="730.90" y="115.30" font-size="5.2" fill="#4c4d5c" textLength="23.70" lengthAdjust="spacing">Show done</text>
<text x="158.10" y="136.10" font-size="6.4" fill="#8e8fa3" textLength="52.20" lengthAdjust="spacing">Unused data flows</text>
<text x="141.90" y="152.20" font-size="6.2" fill="#15161f" font-weight="700">2</text>
<text x="146.85" y="152.20" font-size="4.8" fill="#9c9db0" textLength="16.30" lengthAdjust="spacing">insights</text>
<text x="141.90" y="168.80" font-size="7.4" fill="#111219" font-weight="700" textLength="8.48" lengthAdjust="spacing" stroke="#111219" stroke-width="0.15">$0</text>
<text x="141.90" y="176.90" font-size="5.0" fill="#a9aabb" textLength="13.00" lengthAdjust="spacing">Saved</text>
<text x="178.10" y="168.80" font-size="7.4" fill="#111219" font-weight="700" textLength="23.31" lengthAdjust="spacing" stroke="#111219" stroke-width="0.15">$47.64</text>
<text x="178.10" y="176.90" font-size="5.0" fill="#a9aabb" textLength="33.80" lengthAdjust="spacing">Potential saving</text>
<text x="286.00" y="136.10" font-size="6.4" fill="#8e8fa3" textLength="66.20" lengthAdjust="spacing">Frequency optimization</text>
<text x="269.80" y="152.20" font-size="6.2" fill="#15161f" font-weight="700">20</text>
<text x="278.20" y="152.20" font-size="4.8" fill="#9c9db0" textLength="16.30" lengthAdjust="spacing">insights</text>
<text x="269.80" y="168.80" font-size="7.4" fill="#111219" font-weight="700" textLength="8.48" lengthAdjust="spacing" stroke="#111219" stroke-width="0.15">$0</text>
<text x="269.80" y="176.90" font-size="5.0" fill="#a9aabb" textLength="13.00" lengthAdjust="spacing">Saved</text>
<text x="306.00" y="168.80" font-size="7.4" fill="#111219" font-weight="700" textLength="23.31" lengthAdjust="spacing" stroke="#111219" stroke-width="0.15">$8.54k</text>
<text x="306.00" y="176.90" font-size="5.0" fill="#a9aabb" textLength="33.80" lengthAdjust="spacing">Potential saving</text>
<text x="414.00" y="136.10" font-size="6.4" fill="#8e8fa3" textLength="40.20" lengthAdjust="spacing">Orphan tables</text>
<text x="397.80" y="152.20" font-size="6.2" fill="#15161f" font-weight="700">2</text>
<text x="402.75" y="152.20" font-size="4.8" fill="#9c9db0" textLength="16.30" lengthAdjust="spacing">insights</text>
<text x="397.80" y="168.80" font-size="7.4" fill="#111219" font-weight="700" textLength="19.07" lengthAdjust="spacing" stroke="#111219" stroke-width="0.15">$9.17</text>
<text x="397.80" y="176.90" font-size="5.0" fill="#a9aabb" textLength="13.00" lengthAdjust="spacing">Saved</text>
<text x="440.07" y="168.80" font-size="7.4" fill="#111219" font-weight="700" textLength="27.55" lengthAdjust="spacing" stroke="#111219" stroke-width="0.15">$210.64</text>
<text x="440.07" y="176.90" font-size="5.0" fill="#a9aabb" textLength="33.80" lengthAdjust="spacing">Potential saving</text>
<text x="542.00" y="136.10" font-size="6.4" fill="#8e8fa3" textLength="39.00" lengthAdjust="spacing">Inactive users</text>
<text x="525.80" y="152.20" font-size="6.2" fill="#15161f" font-weight="700">1</text>
<text x="530.75" y="152.20" font-size="4.8" fill="#9c9db0" textLength="14.00" lengthAdjust="spacing">insight</text>
<text x="525.80" y="168.80" font-size="7.4" fill="#111219" font-weight="700" textLength="16.95" lengthAdjust="spacing" stroke="#111219" stroke-width="0.15">$120</text>
<text x="525.80" y="176.90" font-size="5.0" fill="#a9aabb" textLength="13.00" lengthAdjust="spacing">Saved</text>
<text x="565.95" y="168.80" font-size="7.4" fill="#111219" font-weight="700" textLength="16.95" lengthAdjust="spacing" stroke="#111219" stroke-width="0.15">$120</text>
<text x="565.95" y="176.90" font-size="5.0" fill="#a9aabb" textLength="33.80" lengthAdjust="spacing">Potential saving</text>
<text x="670.00" y="136.10" font-size="6.4" fill="#8e8fa3" textLength="45.00" lengthAdjust="spacing">Bloated storage</text>
<text x="653.80" y="152.20" font-size="6.2" fill="#15161f" font-weight="700">0</text>
<text x="658.75" y="152.20" font-size="4.8" fill="#9c9db0" textLength="16.30" lengthAdjust="spacing">insights</text>
<text x="653.80" y="168.80" font-size="7.4" fill="#111219" font-weight="700" textLength="8.48" lengthAdjust="spacing" stroke="#111219" stroke-width="0.15">$0</text>
<text x="653.80" y="176.90" font-size="5.0" fill="#a9aabb" textLength="13.00" lengthAdjust="spacing">Saved</text>
<text x="690.00" y="168.80" font-size="7.4" fill="#111219" font-weight="700" textLength="8.48" lengthAdjust="spacing" stroke="#111219" stroke-width="0.15">$0</text>
<text x="690.00" y="176.90" font-size="5.0" fill="#a9aabb" textLength="33.80" lengthAdjust="spacing">Potential saving</text>
<text x="145.40" y="212.40" font-size="5.6" fill="#30313f" textLength="11.60" lengthAdjust="spacing" stroke="#30313f" stroke-width="0.12">Type</text>
<text x="235.00" y="212.40" font-size="5.6" fill="#30313f" textLength="20.40" lengthAdjust="spacing" stroke="#30313f" stroke-width="0.12">Account</text>
<text x="277.00" y="212.40" font-size="5.6" fill="#30313f" textLength="15.60" lengthAdjust="spacing" stroke="#30313f" stroke-width="0.12">Status</text>
<text x="346.70" y="212.40" font-size="5.6" fill="#30313f" textLength="28.50" lengthAdjust="spacing" stroke="#30313f" stroke-width="0.12">Description</text>
<text x="547.50" y="212.40" font-size="5.6" fill="#30313f" textLength="33.80" lengthAdjust="spacing" stroke="#30313f" stroke-width="0.12">Creation date</text>
<text x="596.10" y="212.40" font-size="5.6" fill="#30313f" textLength="32.30" lengthAdjust="spacing" stroke="#30313f" stroke-width="0.12">Updated date</text>
<text x="645.00" y="212.40" font-size="5.6" fill="#30313f" textLength="57.50" lengthAdjust="spacing" stroke="#30313f" stroke-width="0.12">Potential annual saving</text>
<text x="717.60" y="212.40" font-size="5.6" fill="#30313f" textLength="28.50" lengthAdjust="spacing" stroke="#30313f" stroke-width="0.12">Assigned to</text>
<text x="161.50" y="233.15" font-size="6.3" fill="#8c8d9f" textLength="66.50" lengthAdjust="spacing" stroke="#8c8d9f" stroke-width="0.08">Frequency optimization</text>
<text x="234.90" y="233.15" font-size="5.3" fill="#23242f" textLength="25.00" lengthAdjust="spacing" stroke="#23242f" stroke-width="0.06">VMB20877</text>
<text x="283.80" y="233.15" font-size="6.4" fill="#9697a8" textLength="31.20" lengthAdjust="spacing" stroke="#9697a8" stroke-width="0.04">In progress</text>
<text x="346.70" y="224.85" font-size="5.6" fill="#30313c" textLength="187.40" lengthAdjust="spacing" stroke="#30313c" stroke-width="0.12">In the past <tspan font-weight="700" fill="#15161f" stroke="#15161f">7 days</tspan>, the following table <tspan font-weight="700" fill="#15161f" stroke="#15161f">(QUERY_HISTORY)</tspan> had job writes with</text>
<text x="346.70" y="232.60" font-size="5.6" fill="#30313c" textLength="192.30" lengthAdjust="spacing" stroke="#30313c" stroke-width="0.12">no subsequent usage. By optimizing the frequency of these writes between</text>
<text x="346.70" y="240.05" font-size="5.6" fill="#30313c" textLength="154.30" lengthAdjust="spacing" stroke="#30313c" stroke-width="0.12"><tspan font-weight="700" fill="#15161f" stroke="#15161f">00:00–04:00</tspan>, you could save approximately <tspan font-weight="700" fill="#15161f" stroke="#15161f">$5.09k</tspan> each year.</text>
<text x="547.50" y="233.05" font-size="5.3" fill="#23242f" textLength="26.40" lengthAdjust="spacing" stroke="#23242f" stroke-width="0.1">Jul 17, 2024</text>
<text x="596.10" y="233.05" font-size="5.3" fill="#23242f" textLength="30.90" lengthAdjust="spacing" stroke="#23242f" stroke-width="0.1">Dec 09, 2025</text>
<text x="645.00" y="233.05" font-size="5.3" fill="#23242f" textLength="17.18" lengthAdjust="spacing" stroke="#23242f" stroke-width="0.1">$5.09k</text>
<text x="722.10" y="232.55" font-size="5.3" fill="#2a2b36" textLength="18.90" lengthAdjust="spacing" stroke="#2a2b36" stroke-width="0.12">Product</text>
<text x="161.50" y="265.20" font-size="6.3" fill="#8c8d9f" textLength="66.50" lengthAdjust="spacing" stroke="#8c8d9f" stroke-width="0.08">Frequency optimization</text>
<text x="234.90" y="265.20" font-size="5.3" fill="#5b5bd6" textLength="25.00" lengthAdjust="spacing" stroke="#5b5bd6" stroke-width="0.06">VMB20877</text>
<text x="283.80" y="265.20" font-size="6.4" fill="#9697a8" textLength="31.20" lengthAdjust="spacing" stroke="#9697a8" stroke-width="0.04">In progress</text>
<text x="346.70" y="253.50" font-size="5.6" fill="#5656d4" textLength="177.90" lengthAdjust="spacing" stroke="#5656d4" stroke-width="0.12">In the past <tspan font-weight="700" fill="#3838a8" stroke="#3838a8">7 days</tspan>, the following table <tspan font-weight="700" fill="#3838a8" stroke="#3838a8">(ASSET_QUERY_HISTORY)</tspan> had job</text>
<text x="346.70" y="261.20" font-size="5.6" fill="#5656d4" textLength="188.90" lengthAdjust="spacing" stroke="#5656d4" stroke-width="0.12">writes with no subsequent usage. By optimizing the frequency of these writes</text>
<text x="346.70" y="268.65" font-size="5.6" fill="#5656d4" textLength="157.60" lengthAdjust="spacing" stroke="#5656d4" stroke-width="0.12">between <tspan font-weight="700" fill="#3838a8" stroke="#3838a8">00:00–04:00, 06:00–09:00, 11:00–14:00</tspan>, you could save</text>
<text x="346.70" y="276.35" font-size="5.6" fill="#5656d4" textLength="79.00" lengthAdjust="spacing" stroke="#5656d4" stroke-width="0.12">approximately <tspan font-weight="700" fill="#3838a8" stroke="#3838a8">$1.75k</tspan> each year.</text>
<text x="547.50" y="265.10" font-size="5.3" fill="#5b5bd6" textLength="26.40" lengthAdjust="spacing" stroke="#5b5bd6" stroke-width="0.1">Jul 24, 2024</text>
<text x="596.10" y="265.10" font-size="5.3" fill="#5b5bd6" textLength="30.90" lengthAdjust="spacing" stroke="#5b5bd6" stroke-width="0.1">Dec 09, 2025</text>
<text x="645.00" y="265.10" font-size="5.3" fill="#5b5bd6" textLength="17.18" lengthAdjust="spacing" stroke="#5b5bd6" stroke-width="0.1">$1.75k</text>
<text x="722.10" y="264.60" font-size="5.3" fill="#b4b5c2" textLength="38.50" lengthAdjust="spacing">Select assignee</text>
<text x="161.50" y="300.70" font-size="6.3" fill="#8c8d9f" textLength="66.50" lengthAdjust="spacing" stroke="#8c8d9f" stroke-width="0.08">Frequency optimization</text>
<text x="234.90" y="300.70" font-size="5.3" fill="#23242f" textLength="35.30" lengthAdjust="spacing" stroke="#23242f" stroke-width="0.06">DATAMAZE_EU</text>
<text x="283.60" y="300.70" font-size="6.4" fill="#9697a8" textLength="15.40" lengthAdjust="spacing" stroke="#9697a8" stroke-width="0.04">Open</text>
<text x="346.70" y="289.25" font-size="5.6" fill="#30313c" textLength="93.00" lengthAdjust="spacing" stroke="#30313c" stroke-width="0.12">In the past <tspan font-weight="700" fill="#15161f" stroke="#15161f">21 days</tspan>, the following table</text>
<text x="346.70" y="296.85" font-size="5.6" fill="#30313c" textLength="190.30" lengthAdjust="spacing" stroke="#30313c" stroke-width="0.12"><tspan font-weight="700" fill="#15161f" stroke="#15161f">(PROD_NIAGARA_DB.PUBLIC.UNIFIED_QUERY_ASSET)</tspan> had job writes with no</text>
<text x="346.70" y="304.25" font-size="5.6" fill="#30313c" textLength="190.60" lengthAdjust="spacing" stroke="#30313c" stroke-width="0.12">subsequent usage. By optimizing the frequency of these writes between <tspan font-weight="700" fill="#15161f" stroke="#15161f">21:00</tspan></text>
<text x="346.70" y="311.75" font-size="5.6" fill="#30313c" textLength="140.80" lengthAdjust="spacing" stroke="#30313c" stroke-width="0.12"><tspan font-weight="700" fill="#15161f" stroke="#15161f">– 00:00</tspan>, you could save approximately <tspan font-weight="700" fill="#15161f" stroke="#15161f">$548.9</tspan> each year.</text>
<text x="547.50" y="300.60" font-size="5.3" fill="#23242f" textLength="29.50" lengthAdjust="spacing" stroke="#23242f" stroke-width="0.1">Dec 28, 2025</text>
<text x="596.10" y="300.60" font-size="5.3" fill="#23242f" textLength="30.90" lengthAdjust="spacing" stroke="#23242f" stroke-width="0.1">Dec 28, 2025</text>
<text x="645.00" y="300.60" font-size="5.3" fill="#23242f" textLength="17.51" lengthAdjust="spacing" stroke="#23242f" stroke-width="0.1">$548.9</text>
<text x="722.10" y="300.10" font-size="5.3" fill="#b4b5c2" textLength="38.50" lengthAdjust="spacing">Select assignee</text>
<text x="161.50" y="336.80" font-size="6.3" fill="#8c8d9f" textLength="40.40" lengthAdjust="spacing" stroke="#8c8d9f" stroke-width="0.08">Orphan tables</text>
<text x="234.90" y="336.80" font-size="5.3" fill="#23242f" textLength="35.30" lengthAdjust="spacing" stroke="#23242f" stroke-width="0.06">DATAMAZE_EU</text>
<text x="283.60" y="336.80" font-size="6.4" fill="#9697a8" textLength="15.40" lengthAdjust="spacing" stroke="#9697a8" stroke-width="0.04">Open</text>
<text x="346.70" y="324.35" font-size="5.6" fill="#30313c" textLength="92.00" lengthAdjust="spacing" stroke="#30313c" stroke-width="0.12">In the past <tspan font-weight="700" fill="#15161f" stroke="#15161f">21 days</tspan>, the following table</text>
<text x="346.70" y="332.05" font-size="5.6" fill="#30313c" textLength="186.40" lengthAdjust="spacing" stroke="#30313c" stroke-width="0.12"><tspan font-weight="700" fill="#15161f" stroke="#15161f">(PROD_NIAGARA_DB.PUBLIC.COST_TREND_TRANS_CLONE)</tspan> has remained</text>
<text x="346.70" y="339.75" font-size="5.6" fill="#30313c" textLength="180.10" lengthAdjust="spacing" stroke="#30313c" stroke-width="0.12">unused. By removing it, you could save approximately <tspan font-weight="700" fill="#15161f" stroke="#15161f">$201.47</tspan> each year,</text>
<text x="346.70" y="347.45" font-size="5.6" fill="#30313c" textLength="139.40" lengthAdjust="spacing" stroke="#30313c" stroke-width="0.12">decrease <tspan font-weight="700" fill="#15161f" stroke="#15161f">14.27b</tspan> entries and free up <tspan font-weight="700" fill="#15161f" stroke="#15161f">701.72GiB</tspan> of storage.</text>
<text x="547.50" y="336.70" font-size="5.3" fill="#23242f" textLength="29.50" lengthAdjust="spacing" stroke="#23242f" stroke-width="0.1">Nov 21, 2025</text>
<text x="596.10" y="336.70" font-size="5.3" fill="#23242f" textLength="30.90" lengthAdjust="spacing" stroke="#23242f" stroke-width="0.1">Mar 22, 2026</text>
<text x="645.00" y="336.70" font-size="5.3" fill="#23242f" textLength="20.69" lengthAdjust="spacing" stroke="#23242f" stroke-width="0.1">$201.47</text>
<text x="722.10" y="336.20" font-size="5.3" fill="#b4b5c2" textLength="38.50" lengthAdjust="spacing">Select assignee</text>
<text x="161.50" y="366.90" font-size="6.3" fill="#8c8d9f" textLength="39.00" lengthAdjust="spacing" stroke="#8c8d9f" stroke-width="0.08">Inactive users</text>
<text x="283.80" y="366.90" font-size="6.4" fill="#9697a8" textLength="31.20" lengthAdjust="spacing" stroke="#9697a8" stroke-width="0.04">In progress</text>
<text x="346.70" y="366.25" font-size="5.6" fill="#30313c" textLength="148.50" lengthAdjust="spacing" stroke="#30313c" stroke-width="0.12">In the past <tspan font-weight="700" fill="#15161f" stroke="#15161f">60 days</tspan>, <tspan font-weight="700" fill="#15161f" stroke="#15161f">1</tspan> users have not been active in <tspan font-weight="700" fill="#15161f" stroke="#15161f">Power BI</tspan></text>
<text x="547.50" y="366.80" font-size="5.3" fill="#23242f" textLength="29.50" lengthAdjust="spacing" stroke="#23242f" stroke-width="0.1">Feb 09, 2025</text>
<text x="596.10" y="366.80" font-size="5.3" fill="#23242f" textLength="30.90" lengthAdjust="spacing" stroke="#23242f" stroke-width="0.1">Mar 22, 2026</text>
<text x="645.00" y="366.80" font-size="5.3" fill="#23242f" textLength="12.73" lengthAdjust="spacing" stroke="#23242f" stroke-width="0.1">$120</text>
<text x="722.10" y="366.30" font-size="5.3" fill="#b4b5c2" textLength="38.50" lengthAdjust="spacing">Select assignee</text>
<text x="161.50" y="397.10" font-size="6.3" fill="#8c8d9f" textLength="66.50" lengthAdjust="spacing" stroke="#8c8d9f" stroke-width="0.08">Frequency optimization</text>
<text x="234.90" y="397.10" font-size="5.3" fill="#23242f" textLength="25.00" lengthAdjust="spacing" stroke="#23242f" stroke-width="0.06">VMB20877</text>
<text x="283.80" y="397.10" font-size="6.4" fill="#9697a8" textLength="31.20" lengthAdjust="spacing" stroke="#9697a8" stroke-width="0.04">In progress</text>
<text x="346.70" y="385.20" font-size="5.6" fill="#30313c" textLength="90.70" lengthAdjust="spacing" stroke="#30313c" stroke-width="0.12">In the past <tspan font-weight="700" fill="#15161f" stroke="#15161f">7 days</tspan>, the following table</text>
<text x="346.70" y="392.95" font-size="5.6" fill="#30313c" textLength="163.10" lengthAdjust="spacing" stroke="#30313c" stroke-width="0.12"><tspan font-weight="700" fill="#15161f" stroke="#15161f">(STAGING_NIAGARA_DB.PUBLIC.DIM_JOB)</tspan> had job writes with no</text>
<text x="346.70" y="400.60" font-size="5.6" fill="#30313c" textLength="190.60" lengthAdjust="spacing" stroke="#30313c" stroke-width="0.12">subsequent usage. By optimizing the frequency of these writes between <tspan font-weight="700" fill="#15161f" stroke="#15161f">18:00</tspan></text>
<text x="346.70" y="408.05" font-size="5.6" fill="#30313c" textLength="143.00" lengthAdjust="spacing" stroke="#30313c" stroke-width="0.12"><tspan font-weight="700" fill="#15161f" stroke="#15161f">– 16:00</tspan>, you could save approximately <tspan font-weight="700" fill="#15161f" stroke="#15161f">$338.44</tspan> each year.</text>
<text x="547.50" y="397.00" font-size="5.3" fill="#23242f" textLength="29.50" lengthAdjust="spacing" stroke="#23242f" stroke-width="0.1">Dec 19, 2024</text>
<text x="596.10" y="397.00" font-size="5.3" fill="#23242f" textLength="30.90" lengthAdjust="spacing" stroke="#23242f" stroke-width="0.1">Dec 09, 2025</text>
<text x="645.00" y="397.00" font-size="5.3" fill="#23242f" textLength="20.69" lengthAdjust="spacing" stroke="#23242f" stroke-width="0.1">$338.44</text>
<text x="722.10" y="396.50" font-size="5.3" fill="#b4b5c2" textLength="38.50" lengthAdjust="spacing">Select assignee</text>
<text x="161.50" y="432.80" font-size="6.3" fill="#8c8d9f" textLength="66.50" lengthAdjust="spacing" stroke="#8c8d9f" stroke-width="0.08">Frequency optimization</text>
<text x="234.90" y="432.80" font-size="5.3" fill="#23242f" textLength="25.00" lengthAdjust="spacing" stroke="#23242f" stroke-width="0.06">VMB20877</text>
<text x="283.80" y="432.80" font-size="6.4" fill="#9697a8" textLength="31.20" lengthAdjust="spacing" stroke="#9697a8" stroke-width="0.04">In progress</text>
<text x="346.70" y="420.95" font-size="5.6" fill="#30313c" textLength="90.70" lengthAdjust="spacing" stroke="#30313c" stroke-width="0.12">In the past <tspan font-weight="700" fill="#15161f" stroke="#15161f">7 days</tspan>, the following table</text>
<text x="346.70" y="428.55" font-size="5.6" fill="#30313c" textLength="190.30" lengthAdjust="spacing" stroke="#30313c" stroke-width="0.12"><tspan font-weight="700" fill="#15161f" stroke="#15161f">(AGGREGATED_QUERY_HISTORY_USAGE)</tspan> had job writes with no subsequent</text>
<text x="346.70" y="436.25" font-size="5.6" fill="#30313c" textLength="190.30" lengthAdjust="spacing" stroke="#30313c" stroke-width="0.12">usage. By optimizing the frequency of these writes between <tspan font-weight="700" fill="#15161f" stroke="#15161f">00:00–04:00</tspan>, you</text>
<text x="346.70" y="443.75" font-size="5.6" fill="#30313c" textLength="111.90" lengthAdjust="spacing" stroke="#30313c" stroke-width="0.12">could save approximately <tspan font-weight="700" fill="#15161f" stroke="#15161f">$135.48</tspan> each year.</text>
<text x="547.50" y="432.70" font-size="5.3" fill="#23242f" textLength="26.40" lengthAdjust="spacing" stroke="#23242f" stroke-width="0.1">Jul 17, 2024</text>
<text x="596.10" y="432.70" font-size="5.3" fill="#23242f" textLength="30.90" lengthAdjust="spacing" stroke="#23242f" stroke-width="0.1">Dec 09, 2025</text>
<text x="645.00" y="432.70" font-size="5.3" fill="#23242f" textLength="20.69" lengthAdjust="spacing" stroke="#23242f" stroke-width="0.1">$135.48</text>
<text x="722.10" y="432.20" font-size="5.3" fill="#b4b5c2" textLength="38.50" lengthAdjust="spacing">Select assignee</text>
<text x="161.50" y="468.50" font-size="6.3" fill="#8c8d9f" textLength="66.50" lengthAdjust="spacing" stroke="#8c8d9f" stroke-width="0.08">Frequency optimization</text>
<text x="234.90" y="468.50" font-size="5.3" fill="#23242f" textLength="35.30" lengthAdjust="spacing" stroke="#23242f" stroke-width="0.06">DATAMAZE_EU</text>
<text x="283.80" y="468.50" font-size="6.4" fill="#9697a8" textLength="31.20" lengthAdjust="spacing" stroke="#9697a8" stroke-width="0.04">In progress</text>
<text x="346.70" y="456.55" font-size="5.6" fill="#30313c" textLength="176.00" lengthAdjust="spacing" stroke="#30313c" stroke-width="0.12">In the past <tspan font-weight="700" fill="#15161f" stroke="#15161f">7 days</tspan>, the following table <tspan font-weight="700" fill="#15161f" stroke="#15161f">(DIM_JOB)</tspan> had job writes with no</text>
<text x="346.70" y="463.95" font-size="5.6" fill="#30313c" textLength="190.60" lengthAdjust="spacing" stroke="#30313c" stroke-width="0.12">subsequent usage. By optimizing the frequency of these writes between <tspan font-weight="700" fill="#15161f" stroke="#15161f">12:00</tspan></text>
<text x="346.70" y="471.65" font-size="5.6" fill="#30313c" textLength="182.90" lengthAdjust="spacing" stroke="#30313c" stroke-width="0.12"><tspan font-weight="700" fill="#15161f" stroke="#15161f">– 15:00, 17:00 – 22:00, 04:00 – 08:00</tspan>, you could save approximately <tspan font-weight="700" fill="#15161f" stroke="#15161f">$133.47</tspan></text>
<text x="346.70" y="479.65" font-size="5.6" fill="#30313c" textLength="26.10" lengthAdjust="spacing" stroke="#30313c" stroke-width="0.12">each year.</text>
<text x="547.50" y="468.40" font-size="5.3" fill="#23242f" textLength="29.50" lengthAdjust="spacing" stroke="#23242f" stroke-width="0.1">Dec 11, 2024</text>
<text x="596.10" y="468.40" font-size="5.3" fill="#23242f" textLength="30.90" lengthAdjust="spacing" stroke="#23242f" stroke-width="0.1">Dec 09, 2025</text>
<text x="645.00" y="468.40" font-size="5.3" fill="#23242f" textLength="20.69" lengthAdjust="spacing" stroke="#23242f" stroke-width="0.1">$133.47</text>
<text x="722.10" y="467.90" font-size="5.3" fill="#b4b5c2" textLength="38.50" lengthAdjust="spacing">Select assignee</text>
<text x="49.60" y="67.10" font-size="6.4" fill="#f0f0f6" textLength="27.40" lengthAdjust="spacing" stroke="#f0f0f6" stroke-width="0.3">seemore</text>
<text x="49.60" y="72.30" font-size="6.4" fill="#f0f0f6" textLength="18.30" lengthAdjust="spacing" stroke="#f0f0f6" stroke-width="0.3">&gt;data</text>
<text x="46.10" y="99.00" font-size="5.6" fill="#ebebf2" textLength="46.00" lengthAdjust="spacing" stroke="#ebebf2" stroke-width="0.12">Seemore Assistant</text>
<text x="46.10" y="120.30" font-size="5.6" fill="#ebebf2" textLength="27.60" lengthAdjust="spacing" stroke="#ebebf2" stroke-width="0.12">Dashboard</text>
<text x="46.10" y="141.80" font-size="5.6" fill="#ebebf2" textLength="35.50" lengthAdjust="spacing" stroke="#ebebf2" stroke-width="0.12">Cost Overview</text>
<text x="46.10" y="163.30" font-size="5.6" fill="#ebebf2" textLength="26.80" lengthAdjust="spacing" stroke="#ebebf2" stroke-width="0.12">Monitoring</text>
<text x="46.10" y="185.00" font-size="5.6" fill="#ebebf2" textLength="24.40" lengthAdjust="spacing" stroke="#ebebf2" stroke-width="0.12">Discovery</text>
<text x="46.10" y="206.20" font-size="5.6" fill="#ebebf2" textLength="22.40" lengthAdjust="spacing" stroke="#ebebf2" stroke-width="0.12">Contract</text>
<text x="46.10" y="227.80" font-size="5.6" fill="#ebebf2" textLength="34.50" lengthAdjust="spacing" stroke="#ebebf2" stroke-width="0.12">Query History</text>
<text x="46.10" y="249.50" font-size="5.6" fill="#ebebf2" textLength="42.00" lengthAdjust="spacing" stroke="#ebebf2" stroke-width="0.12">Waste Reduction</text>
<text x="46.10" y="271.00" font-size="5.6" fill="#ebebf2" textLength="31.00" lengthAdjust="spacing" stroke="#ebebf2" stroke-width="0.12">Marketplace</text>
<text x="46.10" y="296.60" font-size="5.6" fill="#ebebf2" textLength="20.20" lengthAdjust="spacing" stroke="#ebebf2" stroke-width="0.12">Settings</text>
<text x="27.00" y="485.60" font-size="5.4" fill="#c4c4cc" textLength="140.60" lengthAdjust="spacing">https://development.app.seemoredata.io/waste-reduction</text></svg>
<svg style="position:absolute;left:178.8px;top:246.6px" width="9" height="9.9" viewBox="0 0 10 11"><path d="M3.2 1 Q4.2 0.6 4.5 1.6 L4.9 4.2 Q6.5 3.8 8 4.8 Q9.2 6 8.6 8 Q7.8 10.2 5.4 10.2 Q3 10.2 2 8.4 L1.2 6.4 Q1 5.4 2 5.4 L3 5.8 L2.6 1.8 Q2.6 1.2 3.2 1 Z" fill="#fff" stroke="#1a1a1a" stroke-width="1.2" stroke-linejoin="round"/></svg>
</div></div>
</body></html>
